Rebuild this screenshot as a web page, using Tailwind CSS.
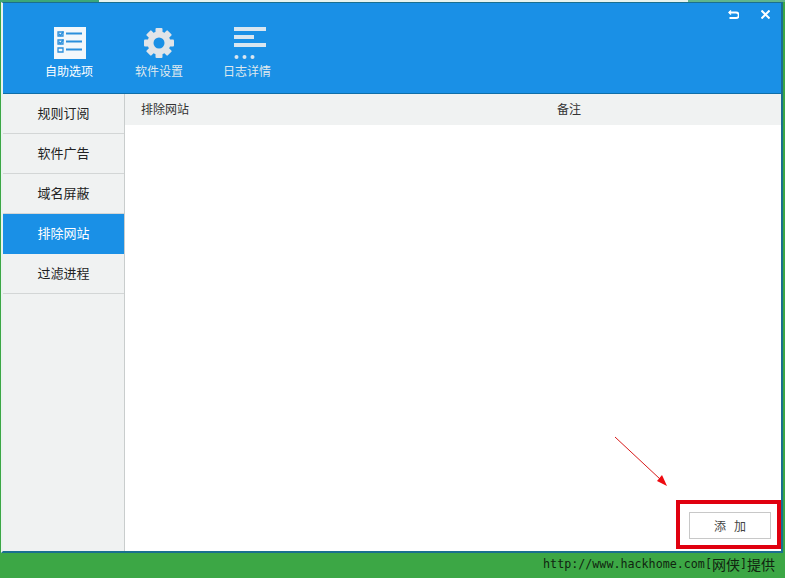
<!DOCTYPE html>
<html lang="zh"><head><meta charset="utf-8"><script src="https://cdn.jsdelivr.net/npm/@tailwindcss/browser@4"></script></head>
<body class="m-0">
<div class="relative w-[785px] h-[578px] overflow-hidden flex flex-col bg-[#3ca745] font-['Noto_Sans_CJK_SC','Noto_Sans',sans-serif]">
  <div class="h-[2px] shrink-0 flex"><div class="w-[99px] bg-[#3ca77a]"></div><div class="w-[589px] bg-[#e8f3ee]"></div><div class="flex-1 bg-[#5fb58c]"></div></div>
  <div class="h-[551px] shrink-0 ml-[1px] mr-[2px] border-2 border-t-[1px] border-[#1a6f8f] border-l-[#e9f3ef] flex flex-col bg-white">
    <header class="relative h-[91px] shrink-0 bg-[#1a90e6] border-b border-[#0f6ea8] flex pl-[21px] pt-[24px] text-[12px] leading-[16px]">
      <div class="w-[90px] flex flex-col items-center text-white">
        <svg width="32" height="32" viewBox="0 0 32 32" class="block ml-[2px]"><rect width="32" height="32" fill="#f2f7fb"/><g fill="none" stroke="#2a8fdc"><path d="M4 5h5v4H4zM4 13h5v4H4zM4 21h5v4H4z" stroke-width="1.3"/><path d="M4.500 6.500l2 2 3-4M4.500 14.500l2 2 3-4" stroke-width="1.300"/><path d="M12 6.500h16M12 14.500h16M12 22.500h16" stroke-width="2"/></g></svg>
        <span class="mt-[4px]">自助选项</span>
      </div>
      <div class="w-[90px] flex flex-col items-center text-[#dfe8ee]">
        <svg width="32" height="32" viewBox="0 0 32 32" class="block"><g fill="#e1e4e8"><circle cx="16" cy="16" r="11.500"/><g><rect x="12.500" y="1" width="7" height="30" rx="1"/><rect x="12.500" y="1" width="7" height="30" rx="1" transform="rotate(45 16 16)"/><rect x="12.500" y="1" width="7" height="30" rx="1" transform="rotate(90 16 16)"/><rect x="12.500" y="1" width="7" height="30" rx="1" transform="rotate(135 16 16)"/></g></g><circle cx="16" cy="16" r="5.500" fill="#1a90e6"/></svg>
        <span class="mt-[4px]">软件设置</span>
      </div>
      <div class="w-[86px] flex flex-col items-center text-[#dfe8ee]">
        <svg width="32" height="32" viewBox="0 0 32 32" class="block ml-[6px]"><g fill="#d9e6f0"><rect width="32" height="4"/><rect y="8" width="20" height="4"/><rect y="16" width="32" height="4"/><circle cx="2.500" cy="30" r="2"/><circle cx="10.500" cy="30" r="2"/><circle cx="18.500" cy="30" r="2"/></g></svg>
        <span class="mt-[4px]">日志详情</span>
      </div>
      <div class="absolute top-[7px] right-[11px] flex gap-[22px] items-center">
        <svg width="11" height="9" viewBox="0 0 11 9" fill="none" stroke="#fff" stroke-width="1.800"><path d="M1 2.500h7a2.500 2.500 0 0 1 0 5.500H1.500"/><path d="M3 .5L1 2.500l2 2" stroke-width="1.400"/></svg>
        <svg width="9" height="9" viewBox="0 0 9 9" fill="none" stroke="#fff" stroke-width="2"><path d="M.5 .5l8 8M8.500 .5l-8 8"/></svg>
      </div>
    </header>
    <div class="flex-1 flex min-h-0">
      <nav class="w-[122px] shrink-0 bg-[#f0f2f2] border-r border-[#c9cdcd] text-[13px] text-[#222]">
        <div class="h-[40px] pb-[2px] border-b border-[#d3d6d6] flex items-center justify-center">规则订阅</div>
        <div class="h-[40px] pb-[2px] border-b border-[#d3d6d6] flex items-center justify-center">软件广告</div>
        <div class="h-[40px] pb-[2px] border-b border-[#d3d6d6] flex items-center justify-center">域名屏蔽</div>
        <div class="h-[40px] pb-[2px] bg-[#1a90e6] text-white flex items-center justify-center">排除网站</div>
        <div class="h-[40px] pb-[2px] border-b border-[#d3d6d6] flex items-center justify-center">过滤进程</div>
      </nav>
      <main class="flex-1 flex flex-col min-w-0 bg-white">
        <div class="h-[31px] shrink-0 pb-[1px] bg-[#f0f2f2] flex items-center pl-[16px] text-[12px] text-[#333]">
          <span class="w-[416px]">排除网站</span><span>备注</span>
        </div>
        <div class="flex-1"></div>
        <div class="flex justify-end pr-[10px] pb-[12px]">
          <button class="w-[82px] h-[27px] bg-white border border-[#c8c8c8] text-[12px] text-[#444] flex items-center justify-center gap-[8px]"><span>添</span><span>加</span></button>
        </div>
      </main>
    </div>
  </div>
  <div class="flex-1 flex items-center justify-end pr-[10px] pb-[2px] font-['DejaVu_Sans_Mono','Noto_Sans_CJK_SC',monospace] text-[11.7px] text-[#10240f]">http://www.hackhome.com[<span class="text-[14px] font-['Noto_Sans_CJK_SC',sans-serif]">网侠</span>]<span class="text-[14px] font-['Noto_Sans_CJK_SC',sans-serif]">提供</span></div>
  <div class="absolute left-[676px] top-[500px] w-[105px] h-[49px] border-[4px] border-[#e0000f]"></div>
  <svg class="absolute left-[610px] top-[432px]" width="62" height="60" viewBox="0 0 62 60"><path d="M5 5L50 47" stroke="#d81a1a" stroke-width="1" fill="none"/><path d="M57 54L47 49L52 43Z" fill="#ee0a10"/></svg>
</div>
</body></html>
